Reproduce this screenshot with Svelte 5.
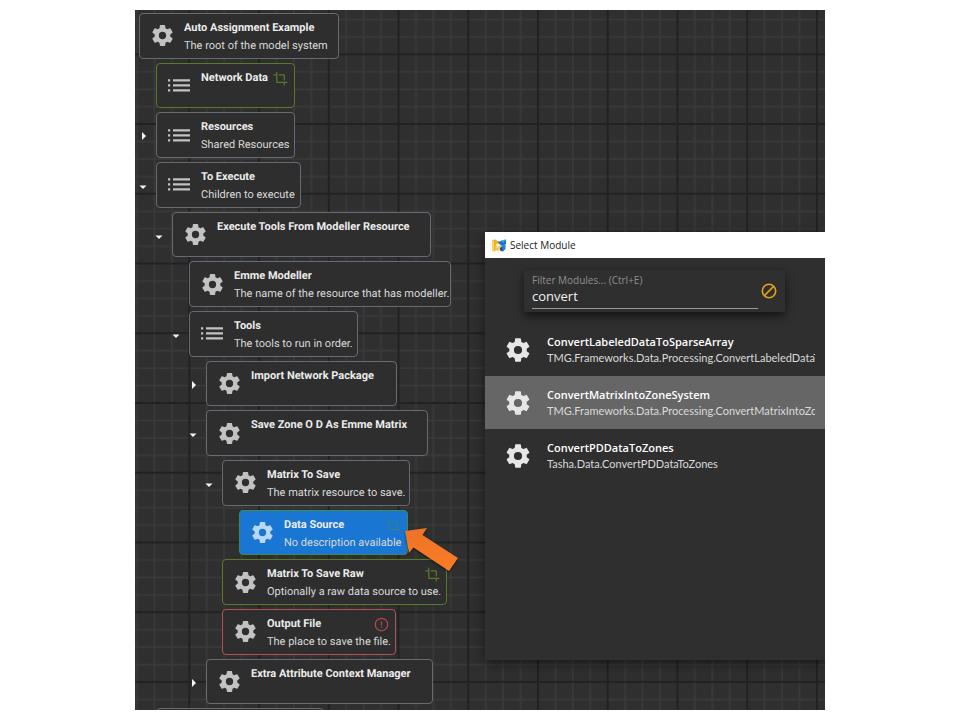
<script>
  const nodes = [
    { level: 0, icon: 'gear', title: 'Auto Assignment Example', text: 'The root of the model system', width: 200 },
    { level: 1, icon: 'list', title: 'Network Data', width: 139, kind: 'optional', badge: 'crop' },
    { level: 1, icon: 'list', title: 'Resources', text: 'Shared Resources', width: 139, caret: 'closed' },
    { level: 1, icon: 'list', title: 'To Execute', text: 'Children to execute', width: 145, caret: 'open' },
    { level: 2, icon: 'gear', title: 'Execute Tools From Modeller Resource', width: 259, caret: 'open' },
    { level: 3, icon: 'gear', title: 'Emme Modeller', text: 'The name of the resource that has modeller.', width: 262 },
    { level: 3, icon: 'list', title: 'Tools', text: 'The tools to run in order.', width: 169, caret: 'open' },
    { level: 4, icon: 'gear', title: 'Import Network Package', width: 191, caret: 'closed' },
    { level: 4, icon: 'gear', title: 'Save Zone O D As Emme Matrix', width: 222, caret: 'open' },
    { level: 5, icon: 'gear', title: 'Matrix To Save', text: 'The matrix resource to save.', width: 188, caret: 'open' },
    { level: 6, icon: 'gear', title: 'Data Source', text: 'No description available', width: 169, kind: 'selected', badge: 'crop' },
    { level: 5, icon: 'gear', title: 'Matrix To Save Raw', text: 'Optionally a raw data source to use.', width: 225, kind: 'optional', badge: 'crop' },
    { level: 5, icon: 'gear', title: 'Output File', text: 'The place to save the file.', width: 174, kind: 'error', badge: 'alert' },
    { level: 4, icon: 'gear', title: 'Extra Attribute Context Manager', width: 227, caret: 'closed' },
    { level: 1, width: 168 }
  ];

  const modules = [
    { name: 'ConvertLabeledDataToSparseArray', path: 'TMG.Frameworks.Data.Processing.ConvertLabeledDataToSparseArray' },
    { name: 'ConvertMatrixIntoZoneSystem', path: 'TMG.Frameworks.Data.Processing.ConvertMatrixIntoZoneSystem' },
    { name: 'ConvertPDDataToZones', path: 'Tasha.Data.ConvertPDDataToZones' }
  ];

  let filter = $state('convert');
  let selected = $state(1);
  const shown = $derived(modules.filter((m) => m.name.toLowerCase().includes(filter.toLowerCase())));
  const indent = (level) => Math.round((level * 50) / 3);
</script>

{#snippet gear()}
  <svg class="gear" viewBox="0 0 24 24" aria-hidden="true">
    <path d="M12,15.5A3.5,3.5 0 0,1 8.5,12A3.5,3.5 0 0,1 12,8.5A3.5,3.5 0 0,1 15.5,12A3.5,3.5 0 0,1 12,15.5M19.43,12.97C19.47,12.65 19.5,12.33 19.5,12C19.5,11.67 19.47,11.34 19.43,11L21.54,9.37C21.73,9.22 21.78,8.95 21.66,8.73L19.66,5.27C19.54,5.05 19.27,4.96 19.05,5.05L16.56,6.05C16.04,5.66 15.5,5.32 14.87,5.07L14.5,2.42C14.46,2.18 14.25,2 14,2H10C9.75,2 9.54,2.18 9.5,2.42L9.13,5.07C8.5,5.32 7.96,5.66 7.44,6.05L4.95,5.05C4.73,4.96 4.46,5.05 4.34,5.27L2.34,8.73C2.21,8.95 2.27,9.22 2.46,9.37L4.57,11C4.53,11.34 4.5,11.67 4.5,12C4.5,12.33 4.53,12.65 4.57,12.97L2.46,14.63C2.27,14.78 2.21,15.05 2.34,15.27L4.34,18.73C4.46,18.95 4.73,19.03 4.95,18.95L7.44,17.94C7.96,18.34 8.5,18.68 9.13,18.93L9.5,21.58C9.54,21.82 9.75,22 10,22H14C14.25,22 14.46,21.82 14.5,21.58L14.87,18.93C15.5,18.67 16.04,18.34 16.56,17.94L19.05,18.95C19.27,19.03 19.54,18.95 19.66,18.73L21.66,15.27C21.78,15.05 21.73,14.78 21.54,14.63L19.43,12.97Z" />
  </svg>
{/snippet}

<main class="board">
  <svg class="grid" aria-hidden="true">
    <defs>
      <pattern id="cells" width="80" height="80" patternUnits="userSpaceOnUse" patternTransform="translate(54.3 44.3) scale(0.8717)">
        <path d="M20 0V80M40 0V80M60 0V80M0 20H80M0 40H80M0 60H80" stroke="#393939" stroke-width="2" />
        <path d="M0 0V80M80 0V80M0 0H80M0 80H80" stroke="#222" stroke-width="2.400" />
      </pattern>
    </defs>
    <rect width="100%" height="100%" fill="url(#cells)" />
  </svg>

  <ul class="tree" aria-label="Model system">
    {#each nodes as node}
      <li style="padding-left: {indent(node.level)}px">
        {#if node.caret}
          <button class="caret {node.caret}" aria-label={node.caret === 'open' ? 'Collapse' : 'Expand'} style="left: {indent(node.level)}px">
            <svg viewBox="0 0 8 8" aria-hidden="true">
              {#if node.caret === 'open'}<path d="M0.5 2.5H7.5L4 6Z" />{:else}<path d="M3 0V8L7 4Z" />{/if}
            </svg>
          </button>
        {/if}
        <button class="card {node.kind ?? ''}" style="width: {node.width}px" aria-label={node.title ?? 'Module'}>
          {#if node.title}
            <span class="icon">
              {#if node.icon === 'gear'}
                {@render gear()}
              {:else}
                <svg class="list" viewBox="0 0 22 13" aria-hidden="true">
                  <path d="M0 0.200h2.200v2.400h-2.200zM5 0.200h17v2.400h-17zM0 5.200h2.200v2.400h-2.200zM5 5.200h17v2.400h-17zM0 10.200h2.200v2.400h-2.200zM5 10.200h17v2.400h-17z" />
                </svg>
              {/if}
            </span>
            <span class="words">
              <strong>{node.title}</strong>
              {#if node.text}<span>{node.text}</span>{/if}
            </span>
            {#if node.badge === 'crop'}
              <svg class="badge" viewBox="0 0 24 24" aria-hidden="true">
                <path d="M7,17V1H5V5H1V7H5V17A2,2 0 0,0 7,19H17V23H19V19H23V17M17,15H19V7C19,5.89 18.1,5 17,5H9V7H17V15Z" />
              </svg>
            {:else if node.badge === 'alert'}
              <svg class="badge" viewBox="0 0 24 24" aria-hidden="true">
                <path d="M11,15H13V17H11V15M11,7H13V13H11V7M12,1A11,11 0 1,0 23,12A11,11 0 0,0 12,1M12,21A9,9 0 1,1 21,12A9,9 0 0,1 12,21Z" />
              </svg>
            {/if}
          {/if}
        </button>
        {#if node.kind === 'selected'}
          <svg class="pointer" viewBox="0 0 56 50" aria-hidden="true">
            <defs>
              <linearGradient id="flame" x1="0" y1="0" x2="0" y2="1">
                <stop offset="0" stop-color="#ec7326" />
                <stop offset="1" stop-color="#fc7c25" />
              </linearGradient>
            </defs>
            <path d="M1 5L23 2L18.500 9L54 32L45 45L9.500 21.500L5 27Z" fill="url(#flame)" />
          </svg>
        {/if}
      </li>
    {/each}
  </ul>

  <section class="window" aria-label="Select Module">
    <header>
      <svg viewBox="0 0 14 13" aria-hidden="true">
        <path d="M0 1L4 0.500L5 2H7V5L5 11L1 12.500L0 11Z" fill="#f0b02e" />
        <path d="M0 1L2 2V12L0 11Z" fill="#ffd45c" />
        <path d="M6 3L10 1.500L14 0.500V5L10 7L7 5Z" fill="#1673d1" />
        <path d="M9 1.500L14 0.500L11 4Z" fill="#49a5ee" />
        <path d="M3.500 6L8 5L10 8L6 12L3 11Z" fill="#f7c65a" />
        <path d="M4 5L7 4.500L8 6L5 9Z" fill="#fff3cf" />
        <path d="M10 7L13.500 5V10L11 12.500L9 9Z" fill="#2480d8" />
        <path d="M8 9L10 7.500L11 12.500L8 11.500Z" fill="#17519b" />
      </svg>
      <h1>Select Module</h1>
    </header>
    <div class="filter">
      <div class="field">
        <label for="filter">Filter Modules... (Ctrl+E)</label>
        <input id="filter" type="text" bind:value={filter} autocomplete="off" spellcheck="false" />
      </div>
      <button aria-label="Clear filter" onclick={() => (filter = '')}>
        <svg viewBox="0 0 16 16" fill="none" stroke="#e5a11b" stroke-width="1.600" aria-hidden="true">
          <circle cx="8" cy="8" r="6.700" />
          <path d="M3.400 12.600L12.600 3.400" />
        </svg>
      </button>
    </div>
    <ul class="modules">
      {#each shown as module, i}
        <li>
          <button class:active={i === selected} onclick={() => (selected = i)}>
            {@render gear()}
            <span class="words">
              <strong>{module.name}</strong>
              <span class="path">{module.path}</span>
            </span>
          </button>
        </li>
      {/each}
    </ul>
  </section>
</main>

<style>
  :global(body) {
    background: #fff;
  }
  .board {
    position: relative;
    display: flex;
    align-items: flex-start;
    height: calc(100vh - 20px);
    margin: 10px 135px;
    overflow: hidden;
    background: #2f2f2f;
    font-family: Roboto, "Liberation Sans", sans-serif;
    font-size: 11px;
    color: #dadada;
  }
  ul {
    list-style: none;
    margin: 0;
    padding: 0;
  }
  button {
    border: 0;
    padding: 0;
    background: none;
    font: inherit;
    color: inherit;
    text-align: left;
    text-rendering: inherit;
  }
  svg {
    display: block;
    flex: none;
  }
  .grid {
    position: absolute;
    inset: 0;
    width: 100%;
    height: 100%;
  }
  .tree {
    position: relative;
    display: grid;
    grid-auto-rows: 1fr;
    flex: 0 0 346px;
    height: 745px;
    margin: 3px 0 0 4px;
    box-sizing: border-box;
    text-rendering: geometricPrecision;
  }
  .tree li {
    position: relative;
    display: flex;
    padding-bottom: 4px;
  }
  .card {
    position: relative;
    display: flex;
    box-sizing: border-box;
    border: 1px solid #646b75;
    border-radius: 4px;
    background: #2e2e2e;
  }
  .card.optional {
    border-color: #5b7a26;
  }
  .card.error {
    border-color: #b0525a;
  }
  .card.selected {
    border-color: #3f8a4c;
    background: #1976d2;
  }
  .icon {
    display: flex;
    align-items: center;
    justify-content: center;
    align-self: stretch;
    width: 44px;
    fill: #c2c2c2;
  }
  .selected .icon {
    fill: #b9d8f5;
  }
  .icon .gear {
    width: 25px;
    height: 25px;
  }
  .list {
    width: 22px;
    height: 13px;
  }
  .words {
    display: flex;
    flex-direction: column;
    min-width: 0;
    white-space: nowrap;
  }
  .card .words {
    padding-top: 5px;
    line-height: 18px;
  }
  .card strong {
    font-weight: 700;
    color: #ececec;
  }
  .badge {
    position: absolute;
    top: 7px;
    right: 6px;
    width: 15px;
    height: 15px;
    fill: #58782a;
  }
  .error .badge {
    fill: #b5484c;
  }
  .selected .badge {
    fill: #3a7f86;
  }
  .caret {
    position: absolute;
    top: 21px;
    margin-left: -17px;
  }
  .caret.closed {
    top: 20px;
  }
  .caret svg {
    width: 8px;
    height: 8px;
    fill: #f4f4f4;
  }
  .pointer {
    position: absolute;
    top: 16px;
    left: 265px;
    width: 56px;
    height: 50px;
    z-index: 1;
    filter: drop-shadow(0 1px 1px #0008);
  }
  .window {
    position: relative;
    flex: 1;
    min-width: 0;
    height: 428px;
    margin-top: 222px;
    background: #2f2f2f;
    box-shadow: 0 3px 12px #0008;
    font-family: "Open Sans", "Noto Sans", sans-serif;
  }
  header {
    display: flex;
    align-items: center;
    gap: 4px;
    height: 26px;
    padding-left: 7px;
    background: #fff;
    color: #1a1a1a;
  }
  header svg {
    width: 14px;
    height: 13px;
  }
  h1 {
    margin: 0;
    font-size: 10px;
    font-weight: 400;
  }
  .filter {
    display: flex;
    align-items: center;
    gap: 3px;
    box-sizing: border-box;
    height: 42px;
    margin: 12px 40px 11px 39px;
    padding: 0 8px;
    border-radius: 2px;
    background: #2f2f2f;
    box-shadow: 0 4px 10px #0009;
  }
  .field {
    display: flex;
    flex: 1;
    flex-direction: column;
    min-width: 0;
  }
  label {
    font-size: 10px;
    line-height: 14px;
    color: #8f8f8f;
  }
  input {
    width: 100%;
    height: 22px;
    box-sizing: border-box;
    border: 0;
    border-bottom: 1px solid #9a9a9a;
    padding: 0 0 4px;
    outline: 0;
    background: none;
    font: 13px/16px "Open Sans", "Noto Sans", sans-serif;
    color: #f2f2f2;
  }
  .filter svg {
    width: 16px;
    height: 16px;
  }
  .modules button {
    display: flex;
    align-items: center;
    gap: 15px;
    box-sizing: border-box;
    width: 100%;
    height: 53px;
    padding: 0 10px 0 19px;
    fill: #e6e6e6;
  }
  .modules button.active {
    background: #666;
  }
  .modules .gear {
    width: 28px;
    height: 28px;
  }
  .modules .words {
    overflow: hidden;
    line-height: 16px;
  }
  .modules strong {
    font-weight: 600;
    color: #fff;
  }
  .path {
    font-family: Lato, "Open Sans", sans-serif;
  }
</style>
